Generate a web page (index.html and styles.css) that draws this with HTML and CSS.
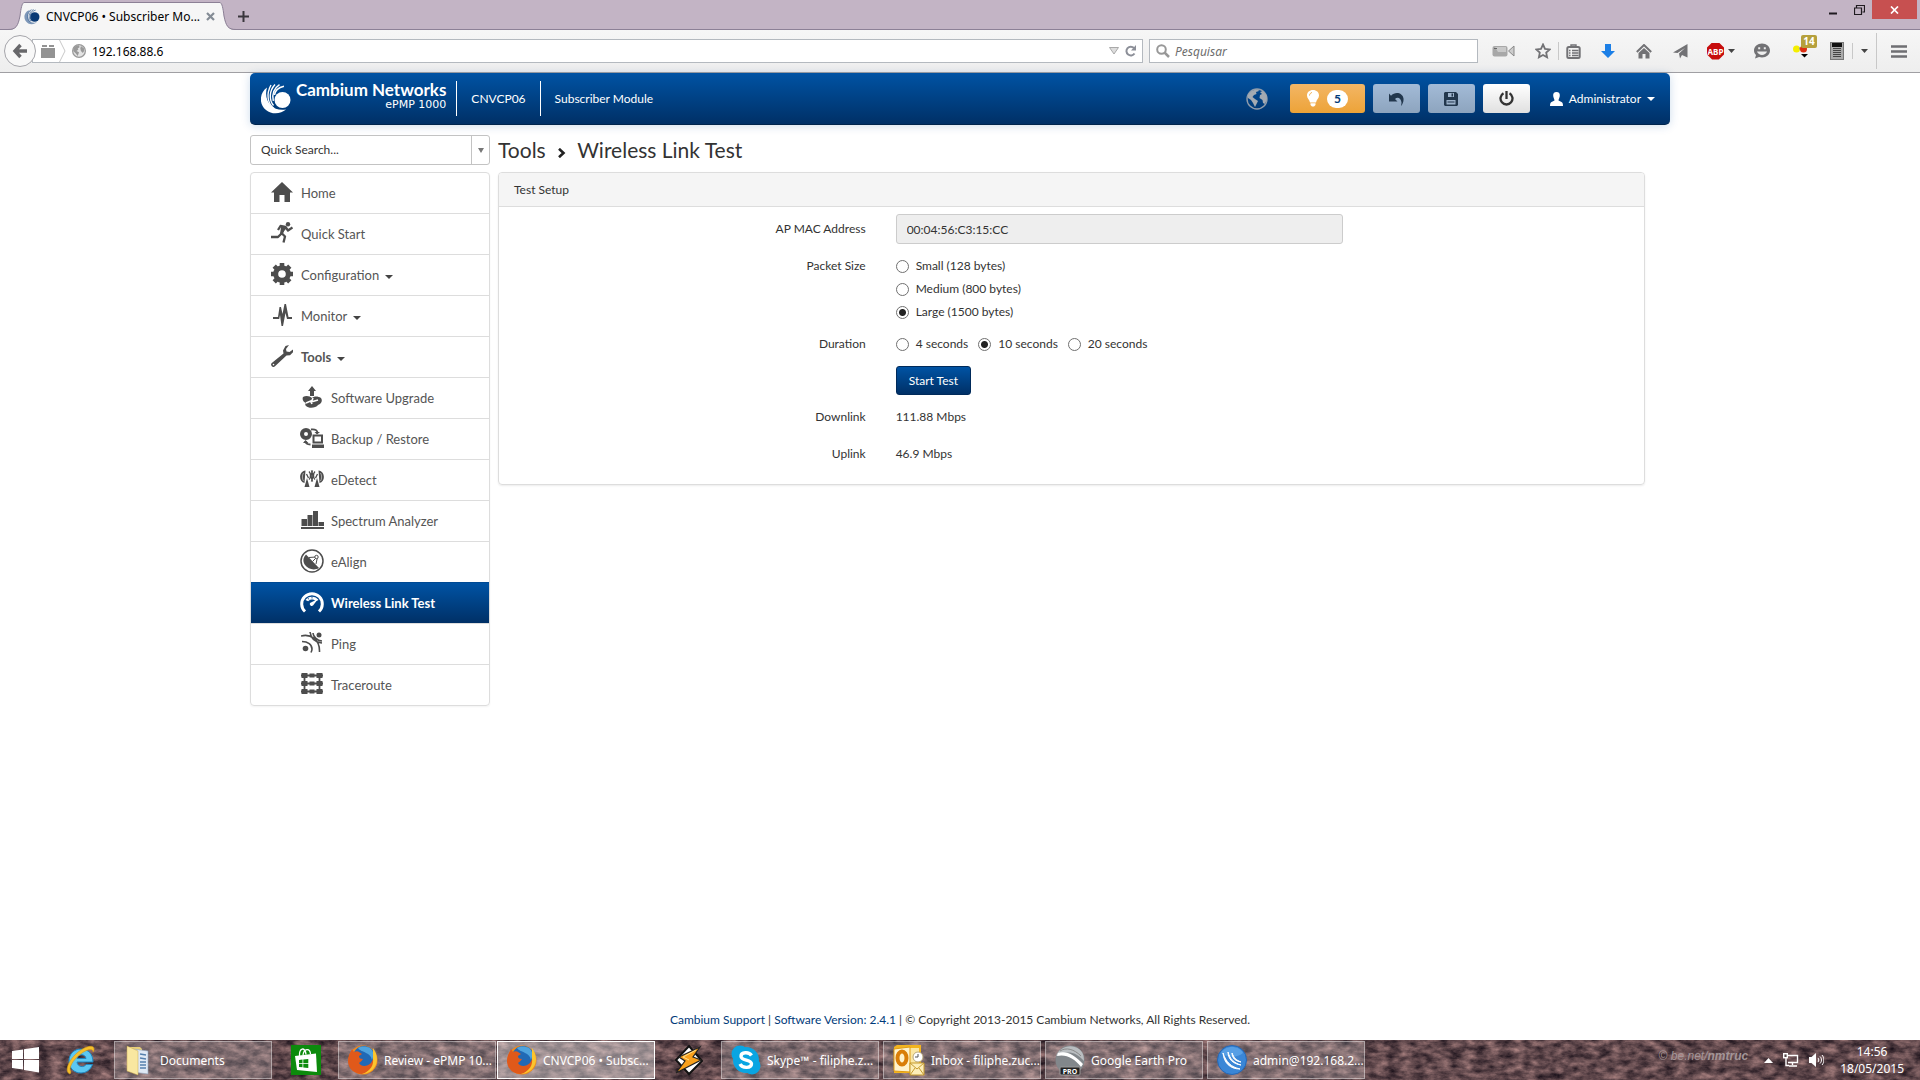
FILE: index.html
```html
<!DOCTYPE html>
<html lang="en">
<head>
    <meta charset="UTF-8">
    <title>CNVCP06 • Subscriber Module</title>
    <link rel="stylesheet" href="styles.css">
</head>
<body>
    <!-- browser: tab strip -->
    <div class="tabs">
        <div class="tab">
            <svg class="tab-edge" width="16" height="28" viewBox="0 0 16 28"><path d="M0 28C8 28 10 24 12 15C13 6 14 .5 16 .5V28z" fill="#f6f6f6"/><path d="M0 27.5C8 27.5 10 24 12 14C13 6 14 1 16 .5" fill="none" stroke="#8c8096"/></svg>
            <div class="tab-body">
                <svg width="16" height="16" viewBox="0 0 30 30"><path d="M11 2C-1 5-3 21 8 27C14 30 21 28 24 25C9 29 3 14 11 2z" fill="#7d97b8"/><circle cx="20" cy="15" r="9" fill="#0a3a75"/><path d="M14 1C4 8 5 20 12 25M18 1C8 6 8 17 13 23M22 2C12 5 11 12 13 18" fill="none" stroke="#4f739f" stroke-width="1.5"/></svg>
                <span class="tab-title">CNVCP06 • Subscriber Mo...</span>
                <button type="button" class="plain" aria-label="Close tab"><svg width="9" height="9" viewBox="0 0 9 9"><path d="M1 1l7 7M8 1L1 8" stroke="#848c95" stroke-width="2.2"/></svg></button>
            </div>
            <svg class="tab-edge" width="16" height="28" viewBox="0 0 16 28"><path d="M16 28C8 28 6 24 4 15C3 6 2 .5 0 .5V28z" fill="#f6f6f6"/><path d="M16 27.5C8 27.5 6 24 4 14C3 6 2 1 0 .5" fill="none" stroke="#8c8096"/></svg>
        </div>
        <button type="button" class="plain new-tab" aria-label="New tab"><svg width="11" height="11" viewBox="0 0 11 11"><path d="M5.5 0v11M0 5.5h11" stroke="#3a363d" stroke-width="2"/></svg></button>
        <div class="win-btns">
            <button type="button" class="plain win" aria-label="Minimize"><svg width="10" height="10" viewBox="0 0 10 10"><path d="M1 8.5h8" stroke="#1f1b20" stroke-width="2"/></svg></button>
            <button type="button" class="plain win" aria-label="Restore"><svg width="11" height="10" viewBox="0 0 11 10"><path d="M.5 3h7v6.500h-7zM0 3h8M2.500 2.500V.5h8v6.500h-2" fill="none" stroke="#1f1b20" stroke-width="1.200"/></svg></button>
            <button type="button" class="plain win win-close" aria-label="Close"><svg width="9" height="8" viewBox="0 0 9 8"><path d="M1 .5l7 7M8 .5l-7 7" stroke="#fff" stroke-width="1.700"/></svg></button>
        </div>
    </div>

    <!-- browser: address bar -->
    <div class="toolbar">
        <button type="button" class="back" aria-label="Back"><svg width="16" height="16" viewBox="0 0 16 16"><path d="M8.500 2L3 8l5.500 6M3 8h12" fill="none" stroke="#68686b" stroke-width="3.400"/></svg></button>
        <div class="url">
            <svg width="14" height="13" viewBox="0 0 14 13"><path d="M0 3h14v10H0zM1 0h5v2H1zM8 0h5v2H8z" fill="#939393"/></svg>
            <svg class="chevron" width="7" height="22" viewBox="0 0 7 22"><path d="M.5 0l5.500 11L.5 22" fill="none" stroke="#c8c8c8"/></svg>
            <svg width="14" height="14" viewBox="0 0 22 22"><circle cx="11" cy="11" r="10" fill="#e4e4e4" stroke="#999" stroke-width="2"/><path d="M2 8C3 4 7 2 11 2L12 5L9 7L10 9L7 11L11 13L9 19L6 15L2 11zM14 3l5 4v4l-2 3-3-3-1-4z" fill="#999"/></svg>
            <input class="url-input" type="text" value="192.168.88.6" aria-label="Address">
            <button type="button" class="plain" aria-label="History"><svg width="10" height="8" viewBox="0 0 10 8"><path d="M.5 .5h9L5 7z" fill="#ddd" stroke="#a9a9a9"/></svg></button>
            <button type="button" class="plain" aria-label="Reload"><svg width="12" height="12" viewBox="0 0 12 12"><path d="M9.500 8.500A4.400 4.400 0 1 1 9 3" fill="none" stroke="#8c8f98" stroke-width="2"/><path d="M11 0v5.500H6z" fill="#8c8f98"/></svg></button>
        </div>
        <div class="search">
            <svg width="14" height="14" viewBox="0 0 14 14"><circle cx="5.500" cy="5.500" r="4.300" fill="none" stroke="#989898" stroke-width="2"/><path d="M8.500 8.500L13 13" stroke="#989898" stroke-width="2.500"/></svg>
            <input class="search-input" type="text" placeholder="Pesquisar" aria-label="Pesquisar">
        </div>
        <div class="tools">
            <button type="button" class="plain tool" aria-label="Camera"><svg width="23" height="12" viewBox="0 0 23 12"><rect x=".5" y="1" width="15" height="10.500" rx="2" fill="#a8a8a8"/><path d="M3 2h11v5H6z" fill="#c9c9c9"/><path d="M16.500 6L22 1v10z" fill="#ccc" stroke="#888"/><path d="M2 3.500h3" stroke="#666"/></svg></button>
            <button type="button" class="plain tool tool-star" aria-label="Bookmark"><svg width="16" height="16" viewBox="0 0 16 16"><path d="M8 1.500l2 4.300 4.700.6-3.500 3.200.9 4.700L8 12l-4.100 2.300.9-4.700L1.300 6.400 6 5.800z" fill="none" stroke="#727275" stroke-width="1.800"/></svg></button>
            <button type="button" class="plain tool tool-list" aria-label="Bookmarks list"><svg width="15" height="15" viewBox="0 0 15 15"><rect x="1.300" y="3" width="12.400" height="11" rx="1.500" fill="none" stroke="#727275" stroke-width="2"/><path d="M5 2.500V1h5v1.500M3 6.500h1.500M6 6.500h6.500M3 9h1.500M6 9h6.500M3 11.500h1.500M6 11.500h6.500" fill="none" stroke="#727275" stroke-width="1.400"/></svg></button>
            <button type="button" class="plain tool" aria-label="Downloads"><svg width="14" height="14" viewBox="0 0 14 14"><path d="M4 0h6v7h4l-7 7-7-7h4z" fill="#1c7fe6"/></svg></button>
            <button type="button" class="plain tool" aria-label="Home page"><svg width="16" height="15" viewBox="0 0 16 15"><path d="M.8 8L8 1l7.200 7" fill="none" stroke="#727275" stroke-width="2"/><path d="M2.500 9L8 4l5.500 5v5.500h-4V10h-3v4.500h-4z" fill="#727275"/></svg></button>
            <button type="button" class="plain tool" aria-label="Share"><svg width="15" height="15" viewBox="0 0 15 15"><path d="M14.500 0v13.500L9 11l-2 3.500-1-5L12 4l-7.500 5L0 8.500z" fill="#727275"/></svg></button>
            <button type="button" class="plain tool tool-abp" aria-label="Adblock Plus"><span class="abp">ABP</span><svg width="7" height="4" viewBox="0 0 7 4"><path d="M0 0h7L3.500 4z" fill="#444"/></svg></button>
            <button type="button" class="plain tool" aria-label="Chat"><svg width="16" height="16" viewBox="0 0 16 16"><path d="M8 0.500c4.500 0 8 3 8 7s-3.500 7-8 7c-1 0-2-.2-3-.5L1 15.500l1-3.500C.7 10.900 0 9.300 0 7.500c0-4 3.500-7 8-7z" fill="#727275"/><path d="M4.200 4.300h2v2h-2zM9.800 4.300h2v2h-2z" fill="#eee"/><path d="M3 8.500c1.500 4.500 8.500 4.500 10 0z" fill="#eee"/></svg></button>
            <button type="button" class="plain tool tool-mol" aria-label="Flags"><svg width="18" height="14" viewBox="0 0 18 14"><circle cx="4.500" cy="5" r="3.500" fill="#f4ee00"/><path d="M7 4.500h3" stroke="#999" stroke-width="2"/><circle cx="11.500" cy="5" r="3.500" fill="#dd2f13"/><path d="M9 10h7l-3.500 3.500z" fill="#000"/></svg><span class="badge">14</span></button>
            <button type="button" class="plain tool tool-calc" aria-label="Notes"><svg width="14" height="18" viewBox="0 0 14 18"><rect x=".5" y=".5" width="13" height="17" fill="#aaa" stroke="#777"/><rect x="2" y="1" width="10" height="4" fill="#111"/><path d="M3 6.500h8M3 8.500h8M3 10.500h8M3 12.500h8M3 14.500h8" stroke="#444"/></svg></button>
            <button type="button" class="plain tool-more" aria-label="More tools"><svg width="7" height="4" viewBox="0 0 7 4"><path d="M0 0h7L3.500 4z" fill="#444"/></svg></button>
            <button type="button" class="plain tool-menu" aria-label="Menu"><svg width="16" height="13" viewBox="0 0 16 13"><path d="M0 1.500h16M0 6.500h16M0 11.500h16" stroke="#6f6f73" stroke-width="2.600"/></svg></button>
        </div>
    </div>

    <!-- page -->
    <div class="page">
        <header class="header">
            <svg class="logo" width="30" height="30" viewBox="0 0 30 30"><path d="M6 3.500C-2 9-2 21 5 26C11 31 20 30 25 25.500C12 28 2 17 6 3.500z" fill="#fff"/><path d="M10 1C5 10 6.500 19.500 13 24.500M14 .5C8 7 8 16 12.500 21.500M18.500 .7C12 5 11 11 12.300 17M23 2.200C17 3.500 14 7 13.500 11" fill="none" stroke="#fff" stroke-width="1.400"/><circle cx="21.500" cy="16" r="8" fill="#fff"/></svg>
            <div class="brand">
                <span class="brand-name">Cambium Networks</span>
                <span class="brand-model">ePMP 1000</span>
            </div>
            <span class="head-item">CNVCP06</span>
            <span class="head-item">Subscriber Module</span>
            <div class="head-right">
                <svg class="globe" width="22" height="22" viewBox="0 0 22 22"><circle cx="11" cy="11" r="10" fill="none" stroke="#8f9cab" stroke-width="1.400"/><path d="M2 7C4 3 8 1.500 12 1.500L13 3L10 4L10.500 6L8 7L6.500 9L9 11L12 13L10.500 16L9 19L7 15L5 12L2 10zM14 4l3-1 3.500 4 .5 4-2 5-2-1-.5-3-3-2 .5-3 2-1z" fill="#a3aab2"/></svg>
                <button type="button" class="btn btn-warn"><svg width="12" height="17" viewBox="0 0 12 17"><path d="M6 0c3.500 0 6 2.300 6 5.500 0 3-2.500 4-3 7H3c-.5-3-3-4-3-7C0 2.300 2.500 0 6 0zM3.500 13.300h5V15L7 16.500H5L3.500 15z" fill="#fff"/><path d="M2.500 5.500C2.500 4 3.800 2.700 5 2.500" fill="none" stroke="#f0ad4e" stroke-width="1"/></svg><span class="count">5</span></button>
                <button type="button" class="btn btn-dim" aria-label="Undo"><svg width="15" height="14" viewBox="0 0 15 14"><path d="M0 1.500l2 2.300C6-.8 13.500.5 14.500 6.500c.3 2.500-.6 5-2.300 7.500-.2-1 .3-2 .3-3.500C12 6 8.500 4.500 6 7l2.500 2.500H0z" fill="#22374d"/></svg></button>
                <button type="button" class="btn btn-dim" aria-label="Save"><svg width="14" height="14" viewBox="0 0 14 14"><path d="M0 1l1-1h11l2 2v11l-1 1H1l-1-1z" fill="#22374d"/><path d="M4 1h6v4H4zM2.500 8h9v4.500h-9z" fill="#9db3cc"/><path d="M7.500 1.500h1.500v3H7.500zM3.500 9.500h7v1h-7z" fill="#22374d"/></svg></button>
                <button type="button" class="btn btn-light" aria-label="Reboot"><svg width="15" height="15" viewBox="0 0 15 15"><path d="M4.500 2.300a6 6 0 1 0 6 0" fill="none" stroke="#333" stroke-width="2.300"/><path d="M7.500 0v8" stroke="#333" stroke-width="2.300"/></svg></button>
                <button type="button" class="plain user"><svg width="13" height="14" viewBox="0 0 13 14"><path d="M6.500 0C9 0 10 1.500 9.800 4 9.600 6 8.500 7 8.500 8.500L11.500 10C12.500 10.500 13 11.500 13 14H0c0-2.500.5-3.500 1.500-4l3-1.500C4.500 7 3.400 6 3.200 4 3 1.500 4 0 6.500 0z" fill="#fff"/></svg>Administrator<svg width="8" height="4" viewBox="0 0 8 4"><path d="M0 0h8L4 4z" fill="#fff"/></svg></button>
            </div>
        </header>

        <div class="columns">
            <aside class="side">
                <div class="quick">
                    <input class="quick-input" type="text" placeholder="Quick Search..." aria-label="Quick Search">
                    <button type="button" class="plain quick-btn" aria-label="Show options"><svg width="6" height="5" viewBox="0 0 6 5"><path d="M0 0h6L3 5z" fill="#777"/></svg></button>
                </div>
                <nav class="menu">
                    <a class="item" href="#"><span class="icon"><svg width="22" height="20" viewBox="0 0 22 20"><path d="M11 0l11 10.500h-3V20h-5.500v-7h-5v7H3v-9.500H0z" fill="#4d4d4d"/></svg></span>Home</a>
                    <a class="item" href="#"><span class="icon"><svg width="22" height="21" viewBox="0 0 22 21"><circle cx="17" cy="2.300" r="2.200" fill="#4d4d4d"/><path d="M7 8l2.500-4 5 .8-4 6.200 3.500 3.500-1.500 6M10 12l-3 3H0M14.500 5l2.500 3.500 4.500-3" fill="none" stroke="#4d4d4d" stroke-width="2.300" stroke-linejoin="round"/><path d="M10 5l5-.5-3 7-3 1z" fill="#4d4d4d"/></svg></span>Quick Start</a>
                    <a class="item" href="#"><span class="icon"><svg width="22" height="22" viewBox="0 0 22 22"><circle cx="11" cy="11" r="6.300" fill="none" stroke="#4d4d4d" stroke-width="5"/><path d="M11 0v4M11 18v4M0 11h4M18 11h4M3.200 3.200l3 3M15.800 15.800l3 3M3.200 18.800l3-3M15.800 6.200l3-3" stroke="#4d4d4d" stroke-width="4.600"/></svg></span>Configuration<i class="caret"></i></a>
                    <a class="item" href="#"><span class="icon"><svg width="19" height="22" viewBox="0 0 19 22"><path d="M0 13h5l1.500-10h1.500l1.500 7L11.500 0H13l2.500 13H19v2h-5l-1.500-6-2.500 13H8.500L7 11l-.8 4H0z" fill="#4d4d4d"/></svg></span>Monitor<i class="caret"></i></a>
                    <a class="item open" href="#"><span class="icon"><svg width="22" height="22" viewBox="0 0 22 22"><path d="M18 0l-3.500 1L12 5.500l.5 3L.8 18a2.300 2.300 0 0 0 3.200 3.300L15.500 10.500l3.500-.2 3-3V4.500L18.500 7l-3-.5-.5-2.500z" fill="#4d4d4d"/><circle cx="2.500" cy="19.600" r=".8" fill="#fff"/></svg></span>Tools<i class="caret"></i></a>
                    <a class="item sub" href="#"><span class="icon"><svg width="20" height="22" viewBox="0 0 20 22"><path d="M10 0l4 5h-2v5H8V5H6z" fill="#4d4d4d"/><path d="M1 11c3-2 7-1 9 1 2-2 6-2 9 0 2 3 0 6-3 7-2 3-9 4-12 1-1-1-1-2 0-3-3-1-4-4-3-6z" fill="#4d4d4d"/><path d="M4 17l6-2.500 1-2.500M10 18l-1-2 7-2" fill="none" stroke="#fff" stroke-width="1.600"/></svg></span>Software Upgrade</a>
                    <a class="item sub" href="#"><span class="icon"><svg width="24" height="20" viewBox="0 0 24 20"><circle cx="6" cy="6" r="4" fill="none" stroke="#4d4d4d" stroke-width="4"/><path d="M13.500 7.500h8.500v7h-8.500z" fill="none" stroke="#4d4d4d" stroke-width="2"/><path d="M12 16.500h12V20H12z" fill="#4d4d4d"/><path d="M11 1.500c4-.5 6 .5 6.500 3M5.500 13c0 2.500 2 3.500 5 3.500" fill="none" stroke="#4d4d4d" stroke-width="1.800"/><path d="M14.500 4H20l-3 2.500zM3 15l2.500-3 3 3z" fill="#4d4d4d"/></svg></span>Backup / Restore</a>
                    <a class="item sub" href="#"><span class="icon"><svg width="24" height="17" viewBox="0 0 24 17"><path d="M5.500 0.500C-1.500 1.500-1.500 12 4.500 13zM18.500.5c7 1 7 11.500 1 12.500z" fill="#4d4d4d"/><path d="M6.500 4l2 4M17.500 4l-2 4M9 1.500c2 2 2 6 0 8M15 1.500c-2 2-2 6 0 8M11.300.5c2 3 2 8 0 11M12.700.5c-2 3-2 8 0 11" fill="none" stroke="#4d4d4d" stroke-width="1.300"/><path d="M7 8l-2.500 9h5zM17 8l-2.500 9h5z" fill="#4d4d4d"/><path d="M3.500 3c-1.500 2-1.500 6 0 8M20.500 3c1.500 2 1.500 6 0 8" fill="none" stroke="#ccc" stroke-width=".7"/></svg></span>eDetect</a>
                    <a class="item sub" href="#"><span class="icon"><svg width="23" height="18" viewBox="0 0 23 18"><path d="M0 16h23v2H0zM.5 8H6v7H.5zM6.500 4h5v11h-5zM12 0h5v15h-5zM17.500 11H23v4h-5.500z" fill="#4d4d4d"/></svg></span>Spectrum Analyzer</a>
                    <a class="item sub" href="#"><span class="icon"><svg width="24" height="24" viewBox="0 0 24 24"><circle cx="12" cy="12" r="11" fill="none" stroke="#4d4d4d" stroke-width="1.500"/><path d="M6 5.500L19 19C14 22 8 20 5 16C2.500 12.500 3 8.500 6 5.500z" fill="#4d4d4d"/><path d="M9 8.500l7-.5M12.500 12.500L17 8M16 15l1.500-7" fill="none" stroke="#4d4d4d"/><circle cx="16.500" cy="8" r="1.700" fill="#fff" stroke="#4d4d4d"/></svg></span>eAlign</a>
                    <a class="item sub current" href="#"><span class="icon"><svg width="24" height="22" viewBox="0 0 24 22"><path d="M5 20.500A10.300 10.300 0 1 1 19 20.500" fill="none" stroke="#fff" stroke-width="3"/><path d="M5.500 9C8 4.500 16 4.500 18.500 9l-2.700 1.300C14 8 10 8 8.200 10.300z" fill="#fff"/><path d="M18 8l-5 6.500a2 2 0 0 1-3-2.500z" fill="#fff"/><path d="M8 7l.8 1.500M12 5.800v1.700" stroke="#00458d" stroke-width=".8"/></svg></span>Wireless Link Test</a>
                    <a class="item sub" href="#"><span class="icon"><svg width="22" height="21" viewBox="0 0 22 21"><circle cx="4.500" cy="16.500" r="2.800" fill="#4d4d4d"/><circle cx="18" cy="3" r="2.500" fill="#4d4d4d"/><path d="M1 9.500c6 0 10 3 10 7.500 0 1.500-.5 2.500-1 3.500M0 4c9-2.500 19 3 18.500 16M9 0c1 7 5 10.500 12 11M12 1c0 3 4 8 9 8" fill="none" stroke="#4d4d4d" stroke-width="1.600"/></svg></span>Ping</a>
                    <a class="item sub" href="#"><span class="icon"><svg width="22" height="21" viewBox="0 0 22 21"><path d="M0 2.500h22M0 10.500h22M0 18.500h22M3.500 0v21M18.500 0v21" stroke="#4d4d4d" stroke-width="1.800"/><path d="M.5 0h6v5h-6zM8.500.5h5v4h-5zM15.500 0h6v5h-6zM.5 8h6v5h-6zM8.500 8.500h5v4h-5zM15.500 8h6v5h-6zM.5 16h6v5h-6zM8.500 16.500h5v4h-5zM15.500 16h6v5h-6z" fill="#4d4d4d"/></svg></span>Traceroute</a>
                </nav>
            </aside>

            <main class="main">
                <h1 class="title">Tools <svg width="8" height="10" viewBox="0 0 8 10"><path d="M1 .8l4.500 4.200L1 9.200" fill="none" stroke="#222" stroke-width="2.600"/></svg> Wireless Link Test</h1>
                <section class="panel">
                    <h2 class="panel-head">Test Setup</h2>
                    <form class="form">
                        <label class="label" for="mac">AP MAC Address</label>
                        <input class="mac" id="mac" type="text" value="00:04:56:C3:15:CC" readonly>

                        <span class="label" id="size">Packet Size</span>
                        <div class="radios stacked" role="radiogroup" aria-labelledby="size">
                            <label class="radio"><input type="radio" name="size">Small (128 bytes)</label>
                            <label class="radio"><input type="radio" name="size">Medium (800 bytes)</label>
                            <label class="radio"><input type="radio" name="size" checked>Large (1500 bytes)</label>
                        </div>

                        <span class="label" id="duration">Duration</span>
                        <div class="radios" role="radiogroup" aria-labelledby="duration">
                            <label class="radio"><input type="radio" name="duration">4 seconds</label>
                            <label class="radio"><input type="radio" name="duration" checked>10 seconds</label>
                            <label class="radio"><input type="radio" name="duration">20 seconds</label>
                        </div>

                        <button type="button" class="start">Start Test</button>

                        <span class="label">Downlink</span>
                        <span class="value">111.88 Mbps</span>

                        <span class="label">Uplink</span>
                        <span class="value">46.9 Mbps</span>
                    </form>
                </section>
            </main>
        </div>
    </div>

    <footer class="footer"><a href="#">Cambium Support</a> | <a href="#">Software Version: 2.4.1</a> | © Copyright 2013-2015 Cambium Networks, All Rights Reserved.</footer>

    <!-- windows taskbar -->
    <div class="taskbar">
        <svg class="granite" width="100%" height="100%" aria-hidden="true">
            <filter id="stone" x="0" y="0" width="100%" height="100%" color-interpolation-filters="sRGB">
                <feTurbulence type="fractalNoise" baseFrequency="0.08 0.15" numOctaves="4" seed="6"/>
                <feColorMatrix type="matrix" values=".7 0 0 0 .03  .55 0 0 0 .01  .5 0 0 0 .05  0 0 0 0 1"/>
            </filter>
            <rect width="100%" height="100%" filter="url(#stone)"/>
        </svg>
        <button type="button" class="plain pin pin-start" aria-label="Start"><svg width="27" height="26" viewBox="0 0 27 26"><path d="M0 4l11-1.500V12H0zM12 2.300L27 0v12H12zM0 13h11v9.500L0 21zM12 13h15v12.500L12 23z" fill="#fff"/></svg></button>
        <button type="button" class="plain pin pin-ie" aria-label="Internet Explorer"><svg width="30" height="32" viewBox="0 0 30 32"><path d="M15 5c7 0 12 5 12 13H11c.5 5 7 6 9 2.500h6.500C24.500 26 20 29 15 29 8 29 3 24 3 17S8 5 15 5zm-4 9.500h9c-.5-5-8.500-5-9 0z" fill="#5cc8f2" stroke="#1e86c2"/><path d="M4 30C-2 28 2 17 11 9 19 2 28 0 28 5c0 1 0 2-1 3 0-4-6-3-13 2.500C7 16 2 24 5 28z" fill="#f5c02c" stroke="#d89a12" stroke-width=".6"/></svg></button>
        <button type="button" class="plain task"><svg width="30" height="32" viewBox="0 0 30 32"><path d="M4 3h12l2 2v22H4z" fill="#e8cf79"/><path d="M9 5l15 2v23l-15-2z" fill="#dfe9f5" stroke="#8ea3bb" stroke-width=".6"/><path d="M16 10l6 1M16 14l6 1M16 18h6M16 21h6M16 24h6" stroke="#5580ad" stroke-width="1.500"/><path d="M3 2l11 5v24l-11-4z" fill="#f9e7a0" stroke="#caa951" stroke-width=".5"/></svg>Documents</button>
        <button type="button" class="plain pin pin-gap" aria-label="Store"><svg width="30" height="30" viewBox="0 0 30 30"><path d="M0 0h30v30H0z" fill="#0c8a0c"/><path d="M4 11l21-2.500L26 27 6 25z" fill="#fff"/><path d="M8.500 11C8 3 14 1 15 9.500M12 10c1-7 7-7 7.500-1" fill="none" stroke="#fff" stroke-width="1.300"/><path d="M8 15l3.500-.4v3.700H8zM12.300 14.500l5-.6v4.400h-5zM8 19h3.500v3.300L8 22zM12.300 19h5v4l-5-.6z" fill="#0c8a0c"/></svg></button>
        <button type="button" class="plain task task-group"><svg width="30" height="30" viewBox="0 0 30 30"><circle cx="15" cy="15" r="14.500" fill="#f18a1b"/><circle cx="16" cy="12" r="11" fill="#2169b5"/><path d="M10 3c3-2 8-2 12 0 4 3 4 8 2 12-1-4-3-6-6-7-3-2-6-2-8-5z" fill="#4fa3dd"/><path d="M2 8l2-4 2 3c2-1 4-1 5 0l3 2-3 2c0 2 1 3 4 3-1 2-3 3-4 4 2 4 8 4 12 0 2-3 3-5 2-9 4 7 2 15-4 18-9 5-20 0-21-10C0 13 .5 11 2 8z" fill="#e0591a"/><path d="M25 3c4 5 6 14 1 20-3 4-8 6-12 6 7-2 12-8 11-15z" fill="#fbc52e"/></svg>Review - ePMP 10...</button>
        <button type="button" class="plain task task-on"><svg width="30" height="30" viewBox="0 0 30 30"><circle cx="15" cy="15" r="14.500" fill="#f18a1b"/><circle cx="16" cy="12" r="11" fill="#2169b5"/><path d="M10 3c3-2 8-2 12 0 4 3 4 8 2 12-1-4-3-6-6-7-3-2-6-2-8-5z" fill="#4fa3dd"/><path d="M2 8l2-4 2 3c2-1 4-1 5 0l3 2-3 2c0 2 1 3 4 3-1 2-3 3-4 4 2 4 8 4 12 0 2-3 3-5 2-9 4 7 2 15-4 18-9 5-20 0-21-10C0 13 .5 11 2 8z" fill="#e0591a"/><path d="M25 3c4 5 6 14 1 20-3 4-8 6-12 6 7-2 12-8 11-15z" fill="#fbc52e"/></svg>CNVCP06 • Subsc...</button>
        <button type="button" class="plain pin pin-gap" aria-label="Winamp"><svg width="30" height="32" viewBox="0 0 30 32"><path d="M15 2l13 15-13 13L2 16z" fill="#fff" stroke="#111" stroke-width="2"/><path d="M26 3L5 13l6 4-9 12 25-13-8-3z" fill="#f9a01b" stroke="#222" stroke-width="1.200"/><path d="M22 6L9 13l6 3" fill="none" stroke="#fde08a"/></svg></button>
        <button type="button" class="plain task"><svg width="30" height="30" viewBox="0 0 30 30"><circle cx="9" cy="9" r="8.500" fill="#0aa5e2"/><circle cx="21" cy="21" r="8.500" fill="#0aa5e2"/><circle cx="15" cy="15" r="13" fill="#0aa5e2"/><path d="M20.500 10.500C18 6.500 10 7 10 11.200c0 5 10.500 2.800 10.500 7.600 0 4.500-9 5-11.500.2" fill="none" stroke="#fff" stroke-width="3.400"/></svg>Skype™ - filiphe.z...</button>
        <button type="button" class="plain task"><svg width="32" height="32" viewBox="0 0 32 32"><path d="M1 3l3-2h24v28H1z" fill="#f3b41f"/><path d="M5 4h21v20H5z" fill="#fbe7a4"/><path d="M1 5l16-2v25l-16-1z" fill="#fff3cc" stroke="#e09b12"/><ellipse cx="9" cy="14" rx="4.500" ry="6.500" fill="none" stroke="#d97e08" stroke-width="4"/><circle cx="25" cy="13" r="5" fill="#fff" stroke="#b9a77a"/><path d="M25 10v3h-3" fill="none" stroke="#555"/><path d="M17 19h14v12H17z" fill="#fdeeb8" stroke="#c59a2e"/><path d="M17 19l7 6 7-6M17 31l5-7M31 31l-5-7" fill="none" stroke="#c59a2e"/></svg>Inbox - filiphe.zuc...</button>
        <button type="button" class="plain task"><svg width="30" height="31" viewBox="0 0 30 31"><circle cx="15" cy="15" r="14.500" fill="#82878b"/><path d="M1 11C4 2 16-2 24 4c4 3 5 7 5 12C20 5 10 6 1 11z" fill="#b9bdc0"/><path d="M3 8C11 5 20 10 28 19l-2 3C19 13 11 9 2 11z" fill="#fff"/><path d="M5 6c6-4 14-2 21 5" fill="none" stroke="#8a8a8a"/><rect x="5" y="22" width="20" height="8" rx="1" fill="#222" stroke="#999"/><text x="15" y="29" class="pro" text-anchor="middle">PRO</text></svg>Google Earth Pro</button>
        <button type="button" class="plain task"><svg width="30" height="30" viewBox="0 0 30 30"><circle cx="15" cy="15" r="14.500" fill="#3a86d6" stroke="#2667b5"/><path d="M4 8C8 0 22 0 26 8c-6 5-16 5-22 0z" fill="#6bb0ee" opacity=".6"/><path d="M6 8c1 10 7 16 17 16-9-2-14-7-17-16zM11 7c0 7 5 12 13 13-7-2-11-6-13-13zM15 8c0 5 3 8 9 9-5-2-7-4-9-9z" fill="#fff" stroke="#fff"/></svg>admin@192.168.2...</button>
        <div class="tray">
            <span class="mark">© be.net/<b>nmtruc</b></span>
            <svg width="9" height="5" viewBox="0 0 9 5"><path d="M4.500 0L9 5H0z" fill="#fff"/></svg>
            <svg width="16" height="14" viewBox="0 0 16 14"><path d="M5 2.500h9.500v7H5M9.500 9.500V12M6 13h8M3 5v7.500h3" fill="none" stroke="#fff" stroke-width="1.400"/><rect x=".7" y=".7" width="3.600" height="4" fill="#574a4c" stroke="#fff" stroke-width="1.400"/></svg>
            <svg width="15" height="14" viewBox="0 0 15 14"><path d="M0 4h2.500L7 0v14L2.500 10H0z" fill="#fff"/><path d="M9 5c1 1 1 3 0 4M11 3.500c2 2 2 5 0 7M13 2c2.500 3 2.500 7 0 10" fill="none" stroke="#fff"/></svg>
            <div class="clock"><span>14:56</span><span>18/05/2015</span></div>
        </div>
    </div>
</body>
</html>
```
FILE: styles.css
```css
*{
    box-sizing: border-box;
}
body{
    margin: 0;
    min-height: 100vh;
    display: flex;
    flex-direction: column;
    background-color: #fff;
    color: #333;
    font-family: Lato, "Noto Sans", sans-serif;
    font-size: 12px;
}
svg{
    flex: none;
}
input{
    font: inherit;
    color: inherit;
}
.plain{
    display: flex;
    align-items: center;
    justify-content: center;
    padding: 0;
    border: 0;
    background: none;
    font: inherit;
    color: inherit;
}
/* tab strip */
.tabs{
    display: flex;
    height: 30px;
    padding-left: 8px;
    background-color: #c3b4c5;
    border-bottom: 1px solid #8c8096;
    font-family: "Noto Sans", sans-serif;
    color: #000;
}
.tab{
    display: flex;
    height: 28px;
    margin-top: 2px;
}
.tab-body{
    display: flex;
    align-items: center;
    width: 196px;
    padding-right: 5px;
    background-color: #f6f6f6;
    border-top: 1px solid #8c8096;
}
.tab-title{
    flex: 1;
    margin-left: 6px;
    white-space: nowrap;
}
.new-tab{
    width: 22px;
    height: 28px;
    margin-top: 2px;
    margin-left: -4px;
}
.win-btns{
    display: flex;
    height: 19px;
    margin-left: auto;
    padding-right: 3px;
}
.win{
    width: 26px;
}
.win-close{
    width: 45px;
    background-color: #c75050;
}
/* address bar */
.toolbar{
    display: flex;
    align-items: center;
    height: 43px;
    padding-left: 4px;
    background-image: linear-gradient(#f6f6f6, #eeeeee);
    border-bottom: 1px solid #a09fa3;
    font-family: "Noto Sans", sans-serif;
}
.back{
    display: flex;
    align-items: center;
    justify-content: center;
    width: 32px;
    height: 32px;
    padding: 0;
    border: 1px solid #a5a5aa;
    border-radius: 50%;
    background-color: #f8f8f8;
    z-index: 1;
}
.url{
    display: flex;
    align-items: center;
    flex: 1;
    gap: 6px;
    height: 24px;
    margin-left: -4px;
    padding: 0 5px 0 8px;
    background-color: #fff;
    border: 1px solid #b4b9bf;
}
.chevron{
    margin-left: -2px;
}
.url-input, .search-input{
    flex: 1;
    min-width: 0;
    padding: 0;
    border: 0;
    background: none;
    outline: none;
    color: #000;
}
.search{
    display: flex;
    align-items: center;
    gap: 5px;
    width: 329px;
    height: 24px;
    margin-left: 6px;
    padding: 0 6px;
    background-color: #fff;
    border: 1px solid #b4b9bf;
}
.search-input::placeholder{
    color: #6d6d6d;
    font-style: italic;
    opacity: 1;
}
.tools{
    display: flex;
    align-items: center;
    height: 42px;
    margin-left: 7px;
}
.tool{
    position: relative;
    width: 36px;
    height: 24px;
}
.tool-star{
    width: 31px;
    margin-left: 6px;
}
.tool-list{
    width: 32px;
    height: 18px;
    padding-right: 2px;
    border-left: 1px solid #c8c8c8;
}
.tool-abp{
    width: 46px;
    gap: 4px;
}
.abp{
    width: 17px;
    height: 17px;
    background-color: #c70d0d;
    clip-path: polygon(30% 0, 70% 0, 100% 30%, 100% 70%, 70% 100%, 30% 100%, 0 70%, 0 30%);
    color: #fff;
    font-size: 8px;
    font-weight: bold;
    line-height: 17px;
}
.tool-mol{
    width: 42px;
}
.badge{
    position: absolute;
    top: -4px;
    right: 5px;
    width: 16px;
    border-radius: 2px;
    background-color: #b5a03c;
    color: #fff;
    font-size: 10px;
    font-weight: bold;
    line-height: 13px;
}
.tool-calc{
    width: 30px;
}
.tool-more{
    width: 24px;
    height: 16px;
    border-left: 1px solid #c8c8c8;
}
.tool-menu{
    width: 44px;
    height: 36px;
    border-left: 1px solid #c8c8c8;
}
/* page */
.page{
    flex: 1;
    width: 100%;
    max-width: 1420px;
    margin: 0 auto;
}
.header{
    display: flex;
    align-items: center;
    height: 52px;
    padding: 0 15px 0 11px;
    border-radius: 5px;
    background-image: linear-gradient(#0053a4, #003066);
    border-bottom: 1px solid #00254d;
    box-shadow: 0 1px 10px rgba(0, 80, 160, 0.2);
    color: #fff;
}
.brand{
    display: flex;
    flex-direction: column;
    align-items: flex-end;
    margin-left: 5px;
    padding-right: 10px;
    border-right: 1px solid #fff;
}
.brand-name{
    font-size: 17px;
    font-weight: bold;
    line-height: 18px;
}
.brand-model{
    font-family: "DejaVu Sans", sans-serif;
    font-size: 11px;
    line-height: 12px;
    padding-bottom: 5px;
}
.head-item{
    padding: 0 14px;
    line-height: 35px;
}
.head-item + .head-item{
    border-left: 1px solid #fff;
}
.head-right{
    display: flex;
    align-items: center;
    gap: 8px;
    margin-left: auto;
}
.globe{
    margin-right: 14px;
}
.btn{
    display: flex;
    align-items: center;
    justify-content: center;
    width: 47px;
    height: 29px;
    padding: 0;
    border: 0;
    border-radius: 3px;
    font: inherit;
}
.btn-warn{
    gap: 8px;
    width: 75px;
    background-image: linear-gradient(#f3b665, #eda338);
}
.count{
    width: 21px;
    border-radius: 9px;
    background-color: #fff;
    color: #003a7a;
    font-weight: bold;
    line-height: 18px;
}
.btn-dim{
    background-image: linear-gradient(#a3bbd7, #8da4be);
}
.btn-light{
    background-image: linear-gradient(#ffffff, #e0e0e0);
}
.user{
    gap: 6px;
    margin-left: 12px;
}
.columns{
    display: flex;
    gap: 8px;
    padding: 10px 25px 0 0;
}
/* left menu */
.side{
    width: 240px;
}
.quick{
    display: flex;
    height: 30px;
    border: 1px solid #c3c3c3;
    border-radius: 3px;
}
.quick-input{
    flex: 1;
    min-width: 0;
    padding: 0 10px 1px;
    border: 0;
    background: none;
}
.quick-input::placeholder{
    color: #333;
    opacity: 1;
}
.quick-btn{
    width: 18px;
    border-left: 1px solid #c3c3c3;
}
.menu{
    margin-top: 7px;
    border: 1px solid #dddddd;
    border-radius: 4px;
    box-shadow: 0 1px 2px rgba(0, 0, 0, 0.05);
}
.item{
    display: flex;
    align-items: center;
    height: 41px;
    padding-left: 19px;
    color: #555;
    font-size: 13px;
    text-decoration: none;
}
.item:first-child{
    height: 40px;
}
.item + .item{
    border-top: 1px solid #dddddd;
}
.icon{
    display: flex;
    justify-content: center;
    width: 24px;
    margin-right: 7px;
    padding-bottom: 3px;
}
.sub{
    padding-left: 49px;
}
.open, .current{
    font-weight: bold;
}
.item.current{
    background-image: linear-gradient(#0053a4, #003066);
    border-color: #004a94;
    color: #fff;
}
.caret{
    margin: 3px 0 0 6px;
    border: 4px solid transparent;
    border-top-color: #444;
    border-bottom: 0;
}
/* content */
.main{
    flex: 1;
}
.title{
    margin: 0 0 7px;
    font-size: 21px;
    font-weight: normal;
    line-height: 30px;
}
.title svg{
    margin: 0 6px 0 7px;
}
.panel{
    border: 1px solid #dddddd;
    border-radius: 4px;
    box-shadow: 0 1px 2px rgba(0, 0, 0, 0.08);
}
.panel-head{
    margin: 0;
    padding: 0 15px;
    border-bottom: 1px solid #dddddd;
    border-radius: 3px 3px 0 0;
    background-color: #f5f5f5;
    font-size: 12px;
    font-weight: normal;
    line-height: 33px;
}
.form{
    display: grid;
    grid-template-columns: 4fr 5fr 3fr;
    row-gap: 7px;
    padding: 7px 0 15px;
}
.label{
    grid-column: 1;
    padding-right: 15px;
    line-height: 30px;
    text-align: right;
}
.mac, .radios, .value, .start{
    grid-column: 2;
    margin: 0 15px;
}
.mac{
    height: 30px;
    padding: 0 10px;
    border: 1px solid #cccccc;
    border-radius: 3px;
    background-color: #eeeeee;
}
.radios{
    display: flex;
    gap: 10px;
}
.stacked{
    flex-direction: column;
    gap: 3px;
    padding-top: 5px;
}
.radio{
    display: flex;
    align-items: center;
    gap: 7px;
    line-height: 20px;
}
.radio input{
    appearance: none;
    width: 13px;
    height: 13px;
    margin: 0;
    border: 1px solid #707070;
    border-radius: 50%;
    background-color: #fff;
}
.radio input:checked{
    background-image: radial-gradient(circle, #222 3px, #fff 4px);
}
.start{
    justify-self: start;
    height: 29px;
    padding: 0 12px;
    border: 1px solid #002a5a;
    border-radius: 3px;
    background-image: linear-gradient(#0053a4, #003066);
    font: inherit;
    color: #fff;
}
.value{
    line-height: 30px;
}
.footer{
    padding: 10px 0;
    line-height: 20px;
    text-align: center;
}
.footer a{
    color: #003a7a;
    text-decoration: none;
}
/* taskbar */
.taskbar{
    position: relative;
    display: flex;
    align-items: center;
    height: 40px;
    overflow: hidden;
    background-color: #63494b;
    font-family: "Noto Sans", sans-serif;
    color: #fff;
}
.granite{
    position: absolute;
    top: 0;
    left: 0;
}
.pin, .task, .tray{
    position: relative;
    height: 38px;
}
.pin-start{
    width: 50px;
}
.pin-ie{
    width: 62px;
    margin-right: 2px;
}
.pin-gap{
    width: 59px;
    margin-right: 3px;
}
.task{
    justify-content: flex-start;
    gap: 6px;
    width: 158px;
    margin-right: 4px;
    padding-left: 9px;
    border: 1px solid rgba(255, 255, 255, 0.4);
    background-color: rgba(255, 255, 255, 0.2);
    white-space: nowrap;
}
.task-group{
    margin-right: 1px;
}
.task-on{
    border-color: #fff;
    background-color: rgba(255, 255, 255, 0.4);
}
.pro{
    fill: #fff;
    font-size: 7px;
    font-weight: bold;
}
.tray{
    display: flex;
    align-items: center;
    gap: 10px;
    margin-left: auto;
    padding-right: 16px;
}
.mark{
    padding: 0 6px 8px 0;
    color: #a39597;
    font-family: "Liberation Sans", sans-serif;
    font-style: italic;
}
.clock{
    display: flex;
    flex-direction: column;
    align-items: center;
    margin-left: 6px;
    line-height: 17px;
}
```
